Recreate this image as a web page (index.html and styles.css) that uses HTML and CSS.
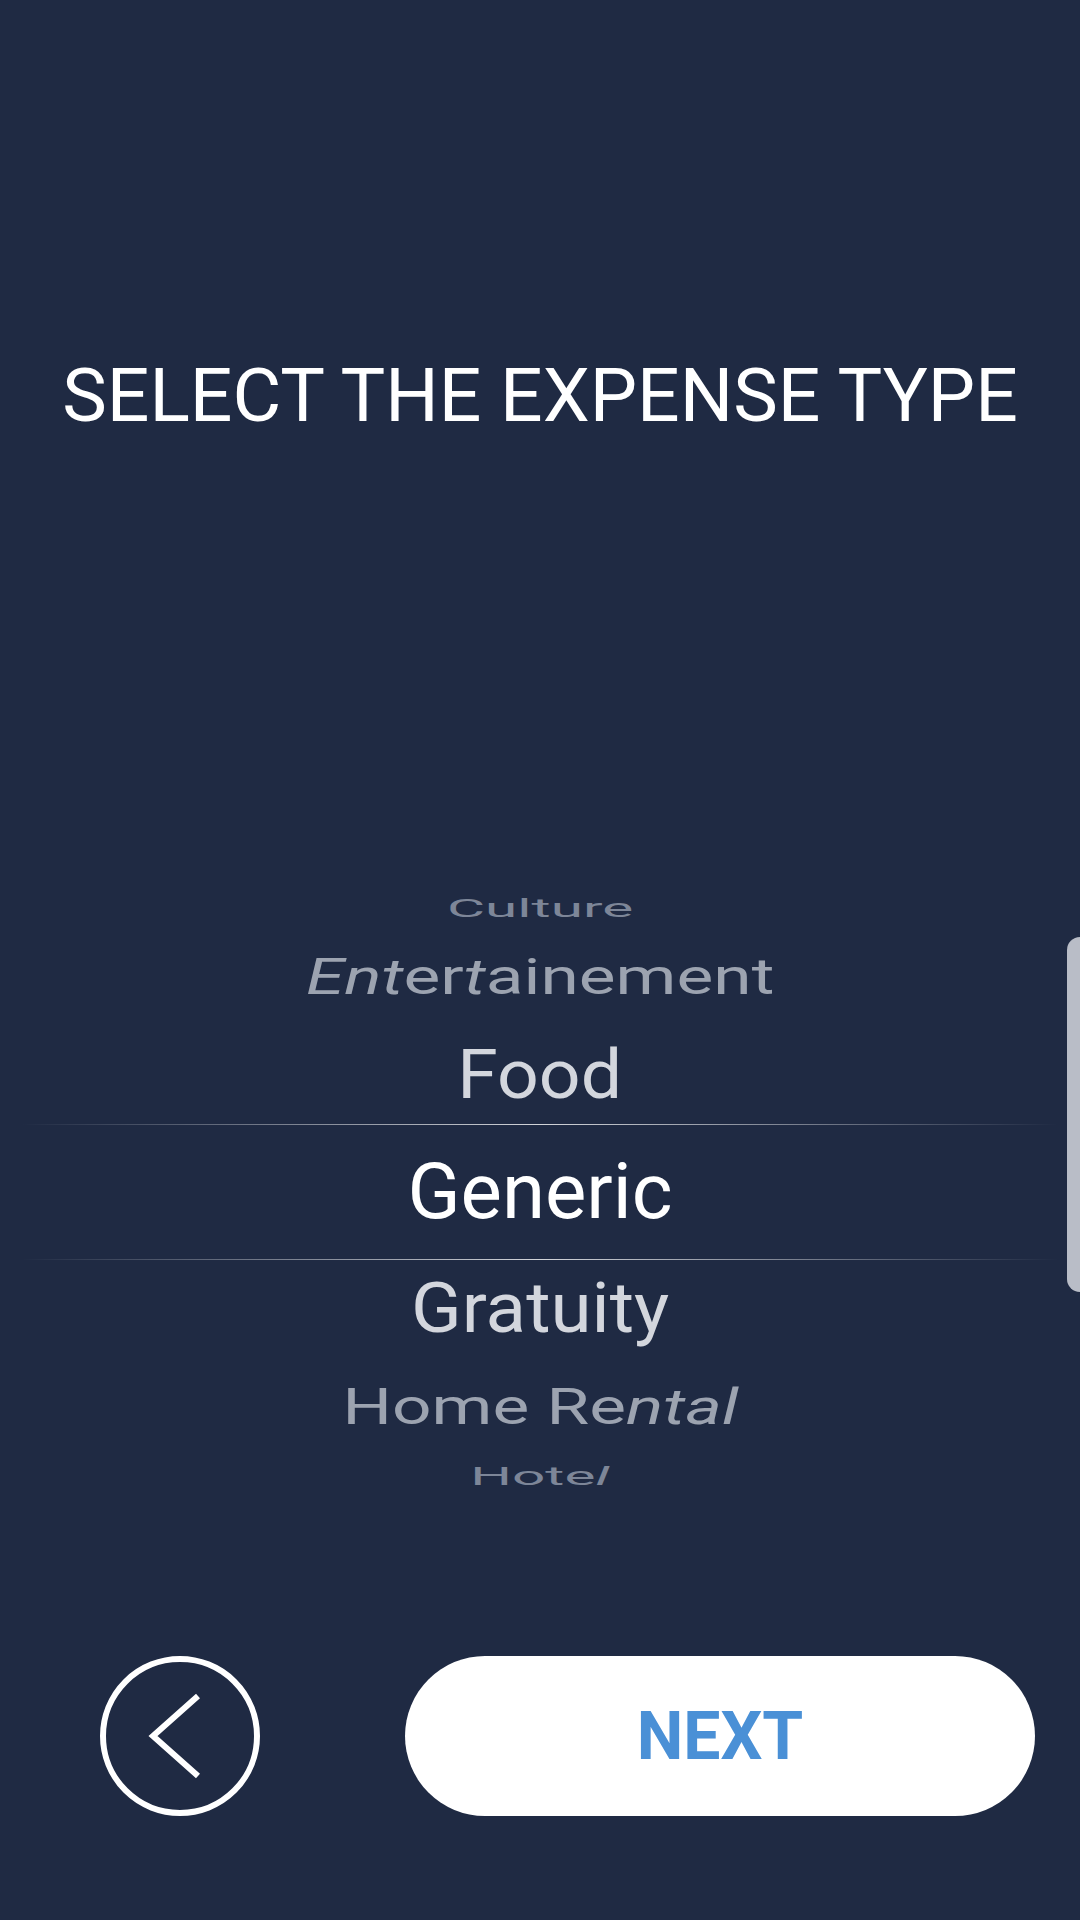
FILE: index.html
```html
<!DOCTYPE html>
<html>
<head>
  <title>Expense Type</title>
  <link rel="stylesheet" href="styles.css">
</head>
<body>

  <div class="screen">
    <h1 class="title">SELECT THE EXPENSE TYPE</h1>

    <!-- wheel picker -->
    <div class="picker">
      <div class="row far"><span>Culture</span></div>
      <div class="row mid mid-top"><span><i>Ent</i>er<i>t</i>ainement</span></div>
      <div class="row near near-top"><span>Food</span></div>
      <div class="row selected"><span>Generic</span></div>
      <div class="row near near-bottom"><span>Gratuity</span></div>
      <div class="row mid mid-bottom"><span>Home Re<i>ntal</i></span></div>
      <div class="row far"><span>Hote<i>l</i></span></div>
    </div>

    <div class="actions">
      <button class="back" aria-label="Back">
        <svg width="54" height="86" viewBox="0 0 54 86">
          <polyline points="50,3 5,43 50,83" fill="none" stroke="#fff" stroke-width="6"/>
        </svg>
      </button>
      <button class="next">NEXT</button>
    </div>

    <div class="scroll-thumb"></div>
  </div>

</body>
</html>
```

FILE: styles.css
```css
body {
  margin: 0;
  background: #1f2a43;
  font-family: Roboto, "Noto Sans", Arial, sans-serif;
}

.screen {
  position: relative;
  height: 1920px;
  display: flex;
  flex-direction: column;
  overflow: hidden;
}

.title {
  margin: 357px 0 0 0;
  font-size: 75px;
  line-height: 76px;
  font-weight: 400;
  color: #fff;
  text-align: center;
  white-space: nowrap;
}

.picker {
  margin-top: 455px;
  display: flex;
  flex-direction: column;
}

.row {
  display: flex;
  justify-content: center;
  align-items: center;
  height: 98px;
  font-size: 78px;
  line-height: 78px;
  white-space: nowrap;
}

.row span {
  display: inline-block;
}

.row i {
  font-style: italic;
}

.far {
  height: 40px;
  color: #7d8698;
}
.far span {
  transform: scale(0.75, 0.34);
}

.mid {
  color: #9ca3b0;
}
.mid span {
  transform: scale(0.89, 0.65);
}

.near {
  color: #d3d6dd;
}
.near-top span {
  transform: scale(0.94, 0.89);
}
.near-bottom span {
  transform: scale(0.955, 0.9);
}

.selected {
  height: 136px;
  color: #fff;
  background:
    linear-gradient(to right, transparent 2%, rgba(255,255,255,0.8) 50%, transparent 98%) top / 100% 1px no-repeat,
    linear-gradient(to right, transparent 2%, rgba(255,255,255,0.8) 50%, transparent 98%) bottom / 100% 1px no-repeat;
}

.actions {
  margin-top: 160px;
  display: flex;
  align-items: center;
  padding: 0 45px 0 100px;
  gap: 145px;
}

.back {
  width: 160px;
  height: 160px;
  border: 6px solid #fff;
  border-radius: 50%;
  background: none;
  padding: 0 10px 0 0;
  display: flex;
  align-items: center;
  justify-content: center;
  box-sizing: border-box;
}

.next {
  flex: 1;
  height: 160px;
  border: none;
  border-radius: 80px;
  background: #fff;
  color: #4a90d6;
  font-family: Roboto, Arial, sans-serif;
  font-size: 66px;
  font-weight: 700;
  padding: 0;
}

.scroll-thumb {
  position: absolute;
  right: 0;
  top: 937px;
  width: 13px;
  height: 355px;
  background: #b9bdc7;
  border-radius: 16px 0 0 16px;
}
```
